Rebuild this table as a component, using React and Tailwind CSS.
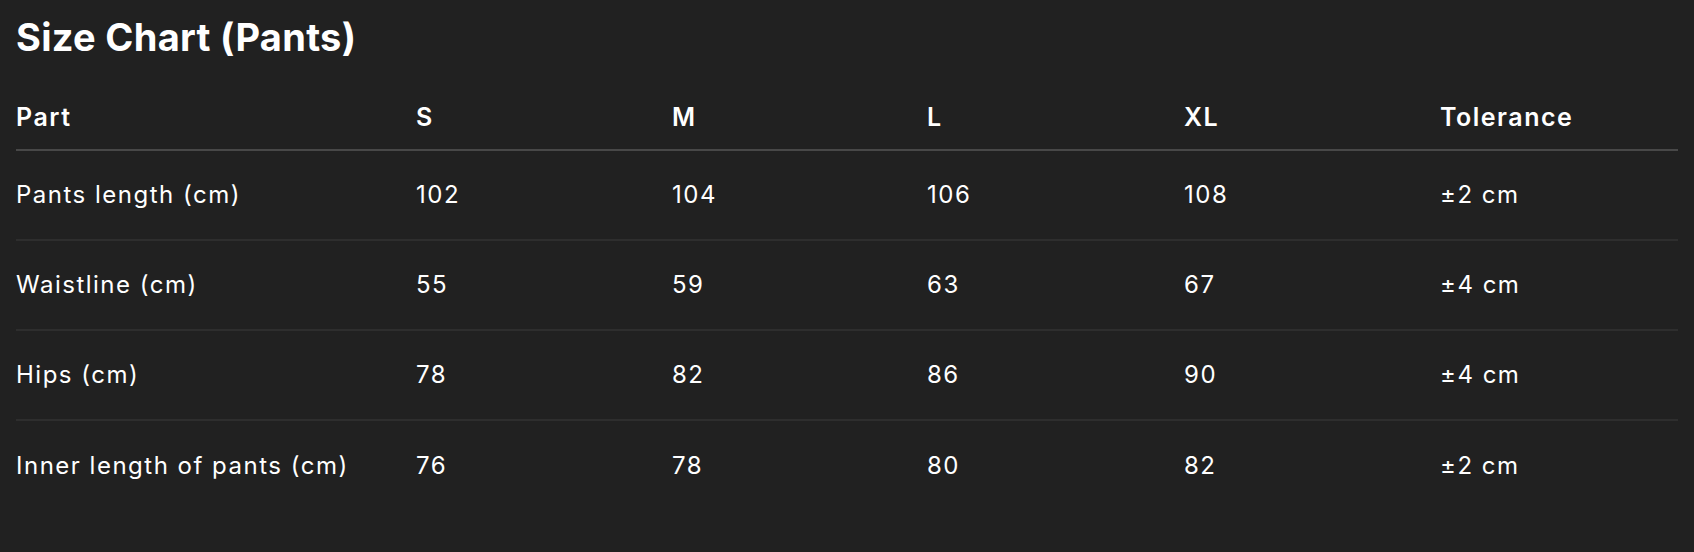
import React from 'react';

const sizes = ['S', 'M', 'L', 'XL'];

const rows = [
  { part: 'Pants length (cm)', values: [102, 104, 106, 108], tolerance: '±2 cm' },
  { part: 'Waistline (cm)', values: [55, 59, 63, 67], tolerance: '±4 cm' },
  { part: 'Hips (cm)', values: [78, 82, 86, 90], tolerance: '±4 cm' },
  { part: 'Inner length of pants (cm)', values: [76, 78, 80, 82], tolerance: '±2 cm' },
];

export default function App() {
  return (
    <div className="min-h-screen bg-[#212121] px-4 text-white font-['Inter',sans-serif]">
      <h1 className="h-[87px] pt-[14px] text-[38px] font-bold leading-[46px] tracking-[0.3px]">Size Chart (Pants)</h1>

      <table className="w-full table-fixed border-collapse text-left">
        <colgroup>
          <col className="w-[400px]" />
          <col className="w-[256px]" />
          <col className="w-[255px]" />
          <col className="w-[257px]" />
          <col className="w-[256px]" />
          <col />
        </colgroup>
        <thead>
          <tr className="h-[63px] border-b-2 border-[#484848]">
            <th className="p-0 text-[25px] font-semibold tracking-[1.5px]">Part</th>
            {sizes.map(s => (
              <th key={s} className="p-0 text-[25px] font-semibold tracking-[1.5px]">{s}</th>
            ))}
            <th className="p-0 text-[25px] font-semibold tracking-[1.5px]">Tolerance</th>
          </tr>
        </thead>
        <tbody>
          {rows.map((row, idx) => (
            <tr
              key={row.part}
              className={idx < rows.length - 1 ? 'h-[90px] border-b-2 border-[#2e2e2e]' : 'h-[90px]'}
            >
              <td className="p-0 text-[24px] tracking-[1.5px]">{row.part}</td>
              {row.values.map((v, i) => (
                <td key={i} className="p-0 text-[24px] tracking-[1.5px]">{v}</td>
              ))}
              <td className="p-0 text-[24px] tracking-[1.5px]">{row.tolerance}</td>
            </tr>
          ))}
        </tbody>
      </table>
    </div>
  );
}
